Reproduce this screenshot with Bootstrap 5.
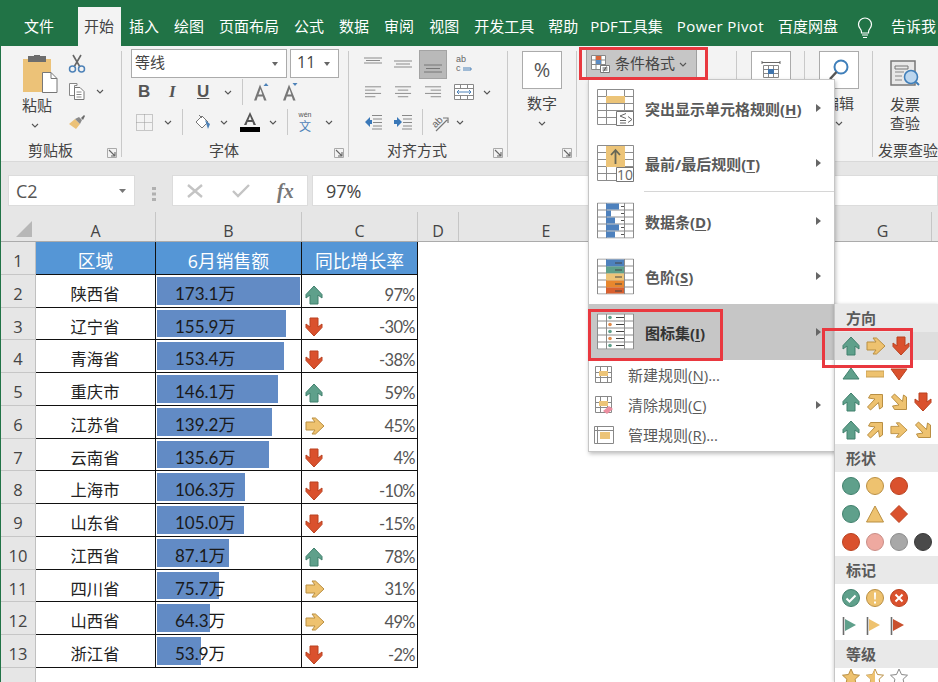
<!doctype html>
<html lang="zh-CN">
<head>
<meta charset="utf-8">
<title>条件格式 图标集</title>
<link href="https://cdn.jsdelivr.net/npm/bootstrap@5.3.0/dist/css/bootstrap.min.css" rel="stylesheet">
<style>
html,body{margin:0;height:682px;overflow:hidden;background:#fff}
body{font-family:"Open Sans","Noto Sans CJK SC",sans-serif;font-size:15px;color:#444;line-height:18px}
.app{position:relative;width:938px;height:682px;overflow:hidden;border-left:1px solid #217346}
.tabs{height:46px;background:#217346;color:#fff;padding:7px 0 0 23px;gap:15px;font-size:15px}
.tabs>span{line-height:39px;flex:none;white-space:nowrap}
.tabs>.tab-on{background:#f3f3f3;color:#444;padding:0 7px 0 6px;margin:0 -7px 0 9px}
.tabs>.tl1{margin-left:-1px}.tabs>.tl2{margin-left:-3px}.tabs>.tl3{margin-left:-1px;letter-spacing:.4px}
.bulb{margin:10px 3px 0 4px;flex:none}
.ribbon{height:116px;background:#f3f3f3;padding:5px 0 0 1px;border-bottom:1px solid #d9d9d9}
.ribbon svg{overflow:visible}
.grp{height:106px;border-right:1px solid #c9c9c9;flex:none}
.g1{width:120px}.g2{width:227px;padding-left:9px}.g3{width:159px}.g4{width:69px}.g5{width:160px}.g6,.g7{width:68px}.g8{width:64px;border-right:0}
.glabel{margin-top:auto;height:16px;margin-bottom:-1px;line-height:16px}
.gtext{flex:1;text-align:center;white-space:nowrap}
.launch{margin:6px 4px 0 8px;flex:none}
.g2 .glabel{margin-left:-9px}
.pastecol{width:36px;margin-left:21px;text-align:center}
.pastecol svg{display:block}
.pastetxt{margin:3px 0 0 -4px;white-space:nowrap;width:36px}
.clipcol{margin-left:9px;padding-top:3px}
.rw{height:24px}
.rw1{height:30px;margin-top:-2px}
.rw2{margin-top:1px}
.rw3{margin-top:6px}
.combo{height:29px;background:#fff;border:1px solid #ababab;padding:0 8px 3px 3px;color:#444;flex:none}
.combo svg{margin-top:3px}
.c1{width:156px}.c2{width:49px;margin-left:3px;font-size:16px;padding-left:6px}
.vsep{width:1px;height:26px;background:#c9c9c9;flex:none}
.fb{font-weight:700;font-size:17px;width:12px;color:#555;font-family:"Liberation Sans",sans-serif;flex:none}
.fi{font-style:italic;font-family:"Liberation Serif",serif}
.fu{text-decoration:underline;width:14px}
.selbox{width:28px;height:29px;background:#b9b9b9;border:1px solid #a3a3a3;flex:none}
.bigbox{width:40px;height:38px;background:#fff;border:1px solid #ababab;margin-left:14px;flex:none;font-size:20px;color:#555}
.bigtext{width:68px;text-align:center;margin-top:5px;white-space:nowrap}
.chevwrap{width:68px;text-align:center;margin-top:7px;line-height:6px}
.cfbtn{height:28px;width:111px;margin:-1px 0 0 9px;background:#c6c6c6;border:1px solid #9f9f9f;border-width:0 1px;padding-left:4px;gap:4px;white-space:nowrap}
.cfbtn span{padding-bottom:2px}
.inv{text-align:center;line-height:19px;padding-top:9px;white-space:nowrap}
.invlabel{margin:auto -10px -1px 5px;white-space:nowrap;line-height:16px;height:16px}
.ml5{margin-left:5px}.ml7{margin-left:7px}.ml9{margin-left:9px}.ml10{margin-left:10px}.ml11{margin-left:11px}.ml12{margin-left:12px}.ml13{margin-left:13px}.ml14{margin-left:14px}.ml15{margin-left:15px}.ml16{margin-left:16px}.ml19{margin-left:19px}
.mt10{margin-top:9px}.mt12{margin-top:13px}.mt4{margin-top:4px}
.fbar{height:50px;background:#e6e6e6;padding:13px 0 0 7px}
.box{height:31px;background:#fff;border:1px solid #dcdcdc;flex:none;font-size:18px;color:#555}
.namebox{width:127px;padding:0 8px 0 7px}
.grip{width:37px;text-align:center}
.fxbox{width:136px;padding-left:13px}
.xok{margin-left:28px}
.fxi{font-family:"Liberation Serif",serif;font-style:italic;font-weight:700;color:#777;font-size:20px;margin-left:27px}
.entry{flex:1;margin-left:4px;padding-left:13px;color:#444}
.colhead{height:30px;background:#e6e6e6;border-bottom:1px solid #ababab;display:flex;font-size:16px;color:#444}
.ch{border-right:1px solid #c6c6c6;text-align:center;line-height:38px;flex:none;height:29px;margin-top:0}
.w0{width:35px}.wa{width:120px}.wb{width:146px}.wc{width:116px}.wd{width:41px}.we{width:175px}.wf{width:200px}.wg{width:98px}
.corner{background:#e6e6e6;border-right:0}
.sheet{display:grid;grid-template-columns:35px 120px 146px 116px;grid-auto-rows:32.75px;font-size:16.3px;color:#222}
.rh{background:#e6e6e6;border-bottom:1px solid #c6c6c6;border-right:1px solid #c0c0c0;text-align:center;line-height:37px;color:#444;font-size:16.5px;font-family:"Open Sans",sans-serif;overflow:hidden}
.td{border-right:1px solid #111;border-bottom:1px solid #111;min-width:0;overflow:hidden}
.thd{background:#5596d6;color:#fff;text-align:center;line-height:38px;font-size:17.8px;white-space:nowrap}
.tda{text-align:center;line-height:38px;padding-right:1px}
.tdb{display:grid;grid-template-rows:minmax(0,1fr);padding:2px 1px;white-space:nowrap}
.tdb>*{grid-area:1/1}
.barfill{background:#628bc5;height:100%}
.barval{padding-left:18px;line-height:34px;font-family:"Lato","Noto Sans CJK SC",sans-serif;font-size:17px;color:#1a1a1a}
.tdc{padding:8px 2px 0;font-family:"Lato",sans-serif;color:#555;font-size:16.5px;letter-spacing:-.6px}
.tdc svg{margin-left:1px}
.rhrest{background:#e6e6e6;height:16px;width:35px;border-right:1px solid #c0c0c0}
.cfmenu{position:absolute;left:587px;top:79px;width:247px;height:373px;background:#fff;border:1px solid #c6c6c6;box-shadow:1px 2px 4px rgba(0,0,0,.25);color:#5a5a5a;font-size:15px;z-index:5}
.mi{height:55.5px;padding-left:8px;font-weight:700}
.mi .mt{margin-left:11px;padding-top:2px;white-space:nowrap}
.mi u,.ms u{text-underline-offset:2px}
.tri{margin-left:auto;margin-right:13px;flex:none}
.mi-on{background:#c6c6c6;color:#333}
.msep{height:1px;background:#d6d6d6;margin:0 0 1px 55px}
.mi.ms{height:30px;padding-left:5px;font-weight:400}
.mi.ms .mt{margin-left:14px;padding-top:0;white-space:nowrap}
.submenu{position:absolute;left:833px;top:304px;width:105px;height:378px;background:#fff;border-left:1px solid #c6c6c6;box-shadow:-1px 0 3px rgba(0,0,0,.15);z-index:6;font-size:15px}
.sh{height:28px;background:#e9e9e9;color:#5a5a5a;font-weight:700;padding-left:11px;line-height:28px}
.sr{height:28px;padding-left:7px;gap:6px}
.sr svg{flex:none}
.sr-on{background:#dedede}
.redbox{position:absolute;border:3px solid #e9383f;z-index:7}
.rb1{left:578px;top:47px;width:129px;height:33px}
.rb2{left:587px;top:309px;width:135px;height:52px}
.rb3{left:821px;top:328px;width:91px;height:40px}
</style>
</head>
<body>
<svg width="0" height="0" class="position-absolute">
<defs>
<symbol id="chev" viewBox="0 0 8 5"><path d="M1 1l3 3 3-3" fill="none" stroke="#555" stroke-width="1.1"/></symbol>
<symbol id="launcher" viewBox="0 0 10 10"><path d="M.5.5h9v9h-9z" fill="none" stroke="#aaa"/><path d="M2 2l5.500 5.500M8 4v4H4" fill="none" stroke="#666" stroke-width="1.1"/></symbol>
<symbol id="up" viewBox="0 0 18 20"><path d="M9 1l8 8.500V13l-4-3v9H5v-9l-4 3V9.500z" fill="#5fa08b" stroke="#41806d"/></symbol>
<symbol id="down" viewBox="0 0 18 20"><path d="M9 19L1 10.500V7l4 3V1h8v9l4-3v3.500z" fill="#da512d" stroke="#ba4220"/></symbol>
<symbol id="right" viewBox="0 0 20 18"><path d="M19 9l-8.500 8H7l3-4H1V5h9L7 1h3.500z" fill="#eec26f" stroke="#b98f43"/></symbol>
<symbol id="ur" viewBox="1 1 18 18"><path d="M17.500 2.500V15l-3 2-1-6.500L5.500 18 2.500 15l7.500-8L3.500 6l2-3.500z" fill="#eec26f" stroke="#b98f43"/></symbol>
<symbol id="dr" viewBox="1 1 18 18"><path d="M17.500 17.500V5l-3-2-1 6.500L5.500 2 2.500 5l7.500 8-6.500 1 2 3.500z" fill="#eec26f" stroke="#b98f43"/></symbol>
<symbol id="grid" viewBox="0 0 37 36"><path d="M.5.500h36v35H.5zM.5 7.500h36M.5 14.500h36M.5 21.500h36M.5 28.500h36M9.500.5v35M27.500.5v35" fill="#fff" stroke="#8c8c8c"/></symbol>
<symbol id="smallgrid" viewBox="0 0 20 20"><path d="M1.500 1.500h16v16h-16zM1.500 7.500h16M1.500 12.500h16M6.500 1.500v16M13.500 1.500v16" fill="#fff" stroke="#888"/><path d="M5 6h9v5H5z" fill="#ecc478"/></symbol>
<symbol id="aleft" viewBox="0 0 18 14"><path d="M0 1.500h17M0 5h11M0 8.500h17M0 12h11" stroke="#888" fill="none"/></symbol>
<symbol id="acenter" viewBox="0 0 18 14"><path d="M0 1.500h17M3 5h11M0 8.500h17M3 12h11" stroke="#888" fill="none"/></symbol>
<symbol id="aright" viewBox="0 0 18 14"><path d="M0 1.500h17M6 5h11M0 8.500h17M6 12h11" stroke="#888" fill="none"/></symbol>
</defs>
</svg>

<div class="app">
  <div class="tabs d-flex">
    <span>文件</span><span class="tab-on">开始</span><span>插入</span><span>绘图</span><span>页面布局</span><span>公式</span><span>数据</span><span>审阅</span><span>视图</span><span>开发工具</span><span class="tl1">帮助</span><span class="tl2">PDF工具集</span><span class="tl3">Power Pivot</span><span class="tl1">百度网盘</span>
    <svg class="bulb" width="16" height="22" viewBox="0 0 16 22"><path d="M8 1a6.500 6.500 0 0 0-6.500 6.500c0 2.500 1.500 3.800 2.500 5.500.5 1 .5 2 .5 3h7c0-1 0-2 .5-3 1-1.700 2.500-3 2.500-5.500A6.500 6.500 0 0 0 8 1z" fill="none" stroke="#fff" stroke-width="1.2"/><path d="M5 18h6M6 20.500h4" stroke="#fff" stroke-width="1.200"/></svg>
    <span>告诉我</span>
  </div>

  <div class="ribbon d-flex">
    <div class="grp g1 d-flex flex-column">
      <div class="d-flex">
        <div class="pastecol">
          <svg class="mt4" width="36" height="38" viewBox="0 0 36 38"><path d="M0 4h28v33H0z" fill="#ecc278"/><path d="M5 1h18v6H5z" fill="#6d6d6d"/><path d="M11 0h6v3h-6z" fill="#6d6d6d"/><path d="M19.500 17.500H28l6 6v14H19.500z" fill="#fff" stroke="#777"/><path d="M28 17.500v6h6" fill="none" stroke="#777"/></svg>
          <div class="pastetxt">粘贴</div>
          <svg class="mt10 ms-2" width="8" height="5"><use href="#chev"/></svg>
        </div>
        <div class="clipcol">
          <svg class="d-block" width="18" height="19" viewBox="0 0 18 19"><path d="M5 1l7 12M13 1L6 13" stroke="#666" stroke-width="1.600"/><circle cx="4.500" cy="15" r="3" fill="none" stroke="#4d82b8" stroke-width="1.500"/><circle cx="13.500" cy="15" r="3" fill="none" stroke="#4d82b8" stroke-width="1.500"/></svg>
          <div class="d-flex align-items-center mt10">
            <svg width="18" height="19" viewBox="0 0 18 19"><path d="M1.500 1.500H9v2H6.500v10h-5z" fill="#fff" stroke="#888"/><path d="M6.500 5.500H12l4 4v8H6.500z" fill="#fff" stroke="#777"/><path d="M8.500 10h5M8.500 12.500h5M8.500 15h5" stroke="#888"/></svg>
            <svg class="ml10" width="8" height="5"><use href="#chev"/></svg>
          </div>
          <svg class="d-block mt12" width="18" height="16" viewBox="0 0 18 16"><path d="M1 10l6-5 5 5-4 5z" fill="#ecc278"/><path d="M7 5l4-2 3 3-2 4z" fill="#8a8a8a"/><path d="M13 4l3-3 1 1-2 4z" fill="#6b6b6b"/></svg>
        </div>
      </div>
      <div class="glabel d-flex"><span class="gtext">剪贴板</span><svg class="launch" width="10" height="10"><use href="#launcher"/></svg></div>
    </div>

    <div class="grp g2 d-flex flex-column">
      <div class="rw1 d-flex">
        <div class="combo c1 d-flex align-items-center justify-content-between"><span>等线</span><svg width="6" height="4" viewBox="0 0 6 4"><path d="M0 0h6L3 4z" fill="#666"/></svg></div>
        <div class="combo c2 d-flex align-items-center justify-content-between"><span>11</span><svg width="6" height="4" viewBox="0 0 6 4"><path d="M0 0h6L3 4z" fill="#666"/></svg></div>
      </div>
      <div class="rw rw2 d-flex align-items-center">
        <span class="fb ml7">B</span><span class="fb fi ml19">I</span><span class="fb fu ml16">U</span>
        <svg class="ml13" width="8" height="5"><use href="#chev"/></svg>
        <span class="vsep ml10"></span>
        <svg class="ml11" width="15" height="18" viewBox="0 0 15 18"><path d="M7 1.500l-6 16h2.500l1.300-4h5l1.300 4h2.500zM5.500 11.500L7.500 6l1.800 5.500z" fill="#777" transform="translate(-1 0)"/><path d="M9.500 3l2.500-3 2.500 3z" fill="#4d82b8"/></svg>
        <svg class="ml14" width="15" height="18" viewBox="0 0 15 18"><path d="M7 1.500l-6 16h2.500l1.300-4h5l1.300 4h2.500zM5.500 11.500L7.500 6l1.800 5.500z" fill="#777" transform="translate(-1 0)"/><path d="M9.500 0l2.500 3 2.500-3z" fill="#4d82b8"/></svg>
      </div>
      <div class="rw rw3 d-flex align-items-center">
        <svg class="ml5" width="17" height="17" viewBox="0 0 17 17"><path d="M.5.500h16v16H.5zM8.500.5v16M.5 8.500h16" fill="none" stroke="#999" stroke-dasharray="1 1"/></svg>
        <svg class="ml11" width="8" height="5"><use href="#chev"/></svg>
        <span class="vsep ml10"></span>
        <svg class="ml11" width="17" height="17" viewBox="0 0 17 17"><path d="M2 8l6-6 6 6-6 6z" fill="#fff" stroke="#777"/><path d="M5 1l3 3" stroke="#777"/><path d="M11 6l5 4-2 5z" fill="#4d82b8"/></svg>
        <svg class="ml9" width="8" height="5"><use href="#chev"/></svg>
        <svg class="ml12" width="20" height="22" viewBox="0 0 20 22"><path d="M10 1l-6 13h2.500l1-3h5l1 3H16zM8.400 9L10 5l1.600 4z" fill="#555"/><path d="M0 16h20v5H0z" fill="#000"/></svg>
        <svg class="ml9" width="8" height="5"><use href="#chev"/></svg>
        <span class="vsep ml10"></span>
        <svg class="ml9" width="16" height="20" viewBox="0 0 16 20"><text x="8" y="5" text-anchor="middle" font-size="7" fill="#555" font-family="Liberation Sans">wén</text><text x="8" y="19" text-anchor="middle" font-size="12" fill="#4d82b8" font-family="Noto Sans CJK SC">文</text></svg>
        <svg class="ml12" width="8" height="5"><use href="#chev"/></svg>
      </div>
      <div class="glabel d-flex"><span class="gtext">字体</span><svg class="launch" width="10" height="10"><use href="#launcher"/></svg></div>
    </div>

    <div class="grp g3 d-flex flex-column">
      <div class="rw1 d-flex align-items-center">
        <svg class="ml15" width="18" height="14" viewBox="0 0 18 14"><path d="M0 1h18M2 3.500h14M0 6h18" stroke="#8b8b8b" fill="none"/></svg>
        <svg class="ml12" width="18" height="14" viewBox="0 0 18 14"><path d="M0 4h18M2 7h14M0 10h18" stroke="#8b8b8b" fill="none"/></svg>
        <div class="selbox ml7 d-flex align-items-end justify-content-center"><svg class="mb-1" width="18" height="10" viewBox="0 0 18 10"><path d="M0 1h18M2 4.500h14M0 8h18" stroke="#777" fill="none"/></svg></div>
        <svg class="ml9" width="16" height="20" viewBox="0 0 16 20"><text x="0" y="8" font-size="9" fill="#666" font-family="Liberation Sans">ab</text><text x="0" y="17" font-size="9" fill="#666" font-family="Liberation Sans">c</text><path d="M7 14h8v2H7" fill="none" stroke="#4d82b8"/></svg>
      </div>
      <div class="rw rw2 d-flex align-items-center">
        <svg class="ml16" width="17" height="14"><use href="#aleft"/></svg>
        <svg class="ml13" width="17" height="14"><use href="#acenter"/></svg>
        <svg class="ml13" width="17" height="14"><use href="#aright"/></svg>
        <svg class="ml12" width="20" height="18" viewBox="0 0 20 18"><path d="M.5 1.500h19v15H.5zM.5 5.500h19M.5 12.500h19M6.500 1.500v4M13.500 1.500v4M6.500 12.500v4M13.500 12.500v4" fill="#fff" stroke="#888"/><path d="M3 9h14M5 7L3 9l2 2M15 7l2 2-2 2" fill="none" stroke="#4d82b8"/></svg>
        <svg class="ml9" width="8" height="5"><use href="#chev"/></svg>
      </div>
      <div class="rw rw3 d-flex align-items-center">
        <svg class="ml15" width="18" height="16" viewBox="0 0 18 16"><path d="M8 1.500h10M9 5h9M9 8.500h9M9 12h9M8 15h10" stroke="#888" fill="none"/><path d="M6 3L1 8l5 5v-3h2V6H6z" fill="#3a78b8"/></svg>
        <svg class="ml12" width="18" height="16" viewBox="0 0 18 16"><path d="M8 1.500h10M9 5h9M9 8.500h9M9 12h9M8 15h10" stroke="#888" fill="none"/><path d="M3 3l5 5-5 5v-3H0V6h3z" fill="#3a78b8"/></svg>
        <span class="vsep ml10"></span>
        <svg class="ml7" width="19" height="19" viewBox="0 0 19 19"><text x="2" y="11" font-size="10" fill="#666" transform="rotate(-45 9 9)" font-family="Liberation Sans">ab</text><path d="M6 18L17 7M13 5h5v5" fill="none" stroke="#777" stroke-width="1.200"/></svg>
        <svg class="ml7" width="8" height="5"><use href="#chev"/></svg>
      </div>
      <div class="glabel d-flex"><span class="gtext">对齐方式</span><svg class="launch" width="10" height="10"><use href="#launcher"/></svg></div>
    </div>

    <div class="grp g4 d-flex flex-column">
      <div class="bigbox d-flex align-items-center justify-content-center">%</div>
      <div class="bigtext">数字</div>
      <div class="chevwrap"><svg width="8" height="5"><use href="#chev"/></svg></div>
      <div class="glabel d-flex"><span class="gtext"></span><svg class="launch" width="10" height="10"><use href="#launcher"/></svg></div>
    </div>

    <div class="grp g5">
      <div class="cfbtn d-flex align-items-center">
        <svg width="20" height="20" viewBox="0 0 20 20"><path d="M.5 1.500h14v14H.5zM.5 6h14M.5 10.500h14M5 1.500v14M10 1.500v14" fill="#fff" stroke="#888"/><path d="M5 2h5v4H5z" fill="#d9653b"/><path d="M5 6h5v4H5z" fill="#5b8cc4"/><path d="M9.500 11.500h9v7h-9z" fill="#fff" stroke="#777"/><path d="M11.500 14h5M11.500 16h5M15.500 12.500l-3 5" stroke="#555" fill="none"/></svg>
        <span>条件格式</span>
        <svg width="8" height="5"><use href="#chev"/></svg>
      </div>
    </div>

    <div class="grp g6"><div class="bigbox d-flex justify-content-center pt-2"><svg width="20" height="18" viewBox="0 0 20 18"><path d="M1 1v3M19 1v3M1 2.500h18" stroke="#666" fill="none"/><path d="M2.500 5.500h15v12h-15zM2.500 9.500h15M2.500 13.500h15M7.500 5.500v12M12.500 5.500v12" fill="#fff" stroke="#888"/><path d="M7 9h6v5H7z" fill="#3f74ad"/></svg></div></div>

    <div class="grp g7 d-flex flex-column">
      <div class="bigbox d-flex justify-content-center align-items-center"><svg width="22" height="24" viewBox="0 0 22 24"><circle cx="13" cy="9" r="6.500" fill="none" stroke="#3f7fba" stroke-width="2"/><path d="M8.500 14L2 21" stroke="#555" stroke-width="2.500"/></svg></div>
      <div class="bigtext">编辑</div>
      <div class="chevwrap"><svg width="8" height="5"><use href="#chev"/></svg></div>
    </div>

    <div class="grp g8 d-flex flex-column">
      <div class="inv d-flex flex-column align-items-center">
        <svg class="mx-auto" width="30" height="26" viewBox="0 0 30 26"><path d="M1 1h24v24H1z" fill="#e8e8e8" stroke="#777" stroke-width="1.500"/><path d="M5 6h13v3H5z" fill="none" stroke="#777"/><path d="M5 12h9M5 16h7M5 20h7" stroke="#888"/><circle cx="21" cy="17" r="6.500" fill="#bcd6ee" stroke="#3f7fba" stroke-width="1.600"/><path d="M26 22l3 3" stroke="#3f7fba" stroke-width="2"/></svg>
        <div class="mt10">发票</div>
        <div>查验</div>
      </div>
      <div class="invlabel">发票查验</div>
    </div>
  </div>

  <div class="fbar d-flex">
    <div class="box namebox d-flex align-items-center justify-content-between"><span>C2</span><svg width="7" height="4" viewBox="0 0 7 4"><path d="M0 0h7L3.500 4z" fill="#777"/></svg></div>
    <div class="grip d-flex justify-content-center align-items-center"><svg width="4" height="14" viewBox="0 0 4 14"><path d="M0 0h4v3H0zM0 5.500h4v3H0zM0 11h4v3H0z" fill="#b0b0b0"/></svg></div>
    <div class="box fxbox d-flex align-items-center">
      <svg width="18" height="14" viewBox="0 0 18 14"><path d="M2 1l14 12M16 1L2 13" stroke="#c4c4c4" stroke-width="2.400"/></svg>
      <svg class="xok" width="18" height="14" viewBox="0 0 18 14"><path d="M1 7l5 5L17 1" fill="none" stroke="#c4c4c4" stroke-width="2.400"/></svg>
      <span class="fxi">fx</span>
    </div>
    <div class="box entry d-flex align-items-center">97%</div>
  </div>

  <div class="colhead">
    <div class="ch w0 corner d-flex align-items-end justify-content-end pe-1"><svg class="mb-1" width="16" height="16" viewBox="0 0 16 16"><path d="M16 0v16H0z" fill="#b7b7b7"/></svg></div>
    <div class="ch wa">A</div><div class="ch wb">B</div><div class="ch wc">C</div><div class="ch wd">D</div><div class="ch we">E</div><div class="ch wf"></div><div class="ch wg">G</div>
  </div>

  <div class="sheet">
    <div class="rh">1</div><div class="td thd">区域</div><div class="td thd">6月销售额</div><div class="td thd">同比增长率</div>

    <div class="rh">2</div><div class="td tda">陕西省</div><div class="td tdb"><span class="barfill" style="width:100%"></span><span class="barval">173.1万</span></div><div class="td tdc d-flex align-items-center justify-content-between"><svg width="18" height="20"><use href="#up"/></svg><span>97%</span></div>
    <div class="rh">3</div><div class="td tda">辽宁省</div><div class="td tdb"><span class="barfill" style="width:90%"></span><span class="barval">155.9万</span></div><div class="td tdc d-flex align-items-center justify-content-between"><svg width="18" height="20"><use href="#down"/></svg><span>-30%</span></div>
    <div class="rh">4</div><div class="td tda">青海省</div><div class="td tdb"><span class="barfill" style="width:88.600%"></span><span class="barval">153.4万</span></div><div class="td tdc d-flex align-items-center justify-content-between"><svg width="18" height="20"><use href="#down"/></svg><span>-38%</span></div>
    <div class="rh">5</div><div class="td tda">重庆市</div><div class="td tdb"><span class="barfill" style="width:84.400%"></span><span class="barval">146.1万</span></div><div class="td tdc d-flex align-items-center justify-content-between"><svg width="18" height="20"><use href="#up"/></svg><span>59%</span></div>
    <div class="rh">6</div><div class="td tda">江苏省</div><div class="td tdb"><span class="barfill" style="width:80.400%"></span><span class="barval">139.2万</span></div><div class="td tdc d-flex align-items-center justify-content-between"><svg width="20" height="18"><use href="#right"/></svg><span>45%</span></div>
    <div class="rh">7</div><div class="td tda">云南省</div><div class="td tdb"><span class="barfill" style="width:78.300%"></span><span class="barval">135.6万</span></div><div class="td tdc d-flex align-items-center justify-content-between"><svg width="18" height="20"><use href="#down"/></svg><span>4%</span></div>
    <div class="rh">8</div><div class="td tda">上海市</div><div class="td tdb"><span class="barfill" style="width:61.400%"></span><span class="barval">106.3万</span></div><div class="td tdc d-flex align-items-center justify-content-between"><svg width="18" height="20"><use href="#down"/></svg><span>-10%</span></div>
    <div class="rh">9</div><div class="td tda">山东省</div><div class="td tdb"><span class="barfill" style="width:60.700%"></span><span class="barval">105.0万</span></div><div class="td tdc d-flex align-items-center justify-content-between"><svg width="18" height="20"><use href="#down"/></svg><span>-15%</span></div>
    <div class="rh">10</div><div class="td tda">江西省</div><div class="td tdb"><span class="barfill" style="width:50.300%"></span><span class="barval">87.1万</span></div><div class="td tdc d-flex align-items-center justify-content-between"><svg width="18" height="20"><use href="#up"/></svg><span>78%</span></div>
    <div class="rh">11</div><div class="td tda">四川省</div><div class="td tdb"><span class="barfill" style="width:43.700%"></span><span class="barval">75.7万</span></div><div class="td tdc d-flex align-items-center justify-content-between"><svg width="20" height="18"><use href="#right"/></svg><span>31%</span></div>
    <div class="rh">12</div><div class="td tda">山西省</div><div class="td tdb"><span class="barfill" style="width:37.100%"></span><span class="barval">64.3万</span></div><div class="td tdc d-flex align-items-center justify-content-between"><svg width="20" height="18"><use href="#right"/></svg><span>49%</span></div>
    <div class="rh">13</div><div class="td tda">浙江省</div><div class="td tdb"><span class="barfill" style="width:31.100%"></span><span class="barval">53.9万</span></div><div class="td tdc d-flex align-items-center justify-content-between"><svg width="18" height="20"><use href="#down"/></svg><span>-2%</span></div>
  </div>
  <div class="rhrest"></div>

  <div class="cfmenu">
    <div class="mi d-flex align-items-center">
      <svg width="37" height="37" viewBox="0 0 37 37"><use href="#grid" width="37" height="36"/><path d="M9 7h19v7H9z" fill="#ecc478"/><path d="M19.500 22.500h17v14h-17z" fill="#fff" stroke="#777"/><path d="M29 24.500l-6 2.500 6 2.500M23 31.500h6M23 34h6M31 27.500l4 3-4 3" fill="none" stroke="#666"/></svg>
      <span class="mt">突出显示单元格规则(<u>H</u>)</span>
      <svg class="tri" width="5" height="8" viewBox="0 0 5 8"><path d="M0 0l5 4-5 4z" fill="#666"/></svg>
    </div>
    <div class="mi d-flex align-items-center">
      <svg width="37" height="37" viewBox="0 0 37 37"><use href="#grid" width="37" height="36"/><path d="M9 1h19v21H9z" fill="#ecc478"/><path d="M18.500 19V5M14 10l4.500-5 4.500 5" fill="none" stroke="#665" stroke-width="1.800"/><path d="M19.500 22.500h17v14h-17z" fill="#fff" stroke="#777"/><text x="28" y="34.500" text-anchor="middle" font-size="14" fill="#666" font-family="Open Sans" font-weight="400">10</text></svg>
      <span class="mt">最前/最后规则(<u>T</u>)</span>
      <svg class="tri" width="5" height="8" viewBox="0 0 5 8"><path d="M0 0l5 4-5 4z" fill="#666"/></svg>
    </div>
    <div class="msep"></div>
    <div class="mi d-flex align-items-center">
      <svg width="37" height="37" viewBox="0 0 37 36"><use href="#grid" width="37" height="36"/><path d="M9 1h13v6H9zM9 8h5v6H9zM9 15h9v6H9zM9 22h13v6H9zM9 29h9v6H9z" fill="#4e81bd"/><path d="M24 4h3M24 11h3M24 18h3M24 25h3M24 32h3" stroke="#555"/></svg>
      <span class="mt">数据条(<u>D</u>)</span>
      <svg class="tri" width="5" height="8" viewBox="0 0 5 8"><path d="M0 0l5 4-5 4z" fill="#666"/></svg>
    </div>
    <div class="mi d-flex align-items-center">
      <svg width="37" height="37" viewBox="0 0 37 36"><use href="#grid" width="37" height="36"/><path d="M9 1h18v7H9z" fill="#4e81bd"/><path d="M9 8h18v7H9z" fill="#5fa08b"/><path d="M9 15h18v7H9z" fill="#ecc478"/><path d="M9 22h18v7H9z" fill="#e8872e"/><path d="M9 29h18v6H9z" fill="#d9602f"/><path d="M18 4.500h7M18 11.500h7M18 18.500h7M18 25.500h7M18 32.500h7" stroke="#444"/></svg>
      <span class="mt">色阶(<u>S</u>)</span>
      <svg class="tri" width="5" height="8" viewBox="0 0 5 8"><path d="M0 0l5 4-5 4z" fill="#666"/></svg>
    </div>
    <div class="mi mi-on d-flex align-items-center">
      <svg width="37" height="37" viewBox="0 0 37 36"><use href="#grid" width="37" height="36"/><circle cx="13" cy="4" r="1.800" fill="#5fa08b"/><circle cx="13" cy="11" r="1.800" fill="#e08a4a"/><circle cx="13" cy="18" r="1.800" fill="#5fa08b"/><circle cx="13" cy="25" r="1.800" fill="#e08a4a"/><circle cx="13" cy="32" r="1.800" fill="#5fa08b"/><path d="M19 4h8M19 11h8M19 18h8M19 25h8M19 32h8" stroke="#444"/></svg>
      <span class="mt">图标集(<u>I</u>)</span>
      <svg class="tri" width="5" height="8" viewBox="0 0 5 8"><path d="M0 0l5 4-5 4z" fill="#666"/></svg>
    </div>
    <div class="ms mi d-flex align-items-center"><svg width="20" height="20"><use href="#smallgrid"/></svg><span class="mt">新建规则(<u>N</u>)...</span></div>
    <div class="ms mi d-flex align-items-center"><svg width="20" height="20" viewBox="0 0 20 20"><use href="#smallgrid"/><path d="M9 16l6-5 4 3-6 5z" fill="#ec8ea0"/></svg><span class="mt">清除规则(<u>C</u>)</span><svg class="tri" width="5" height="8" viewBox="0 0 5 8"><path d="M0 0l5 4-5 4z" fill="#666"/></svg></div>
    <div class="ms mi d-flex align-items-center"><svg width="20" height="20" viewBox="0 0 20 20"><path d="M.5 1.500h19v17H.5zM3.500 1.500v17M.5 5.500h19" fill="#fff" stroke="#888"/><path d="M6 7h10v7H6z" fill="#ecc478"/></svg><span class="mt">管理规则(<u>R</u>)...</span></div>
  </div>

  <div class="submenu">
    <div class="sh">方向</div>
    <div class="sr sr-on d-flex align-items-center"><svg width="18" height="20"><use href="#up"/></svg><svg width="20" height="18"><use href="#right"/></svg><svg width="18" height="20"><use href="#down"/></svg></div>
    <div class="sr d-flex align-items-center"><svg width="18" height="20" viewBox="0 0 18 20"><path d="M9 4l8 11H1z" fill="#5fa08b" stroke="#41806d"/></svg><svg width="18" height="20" viewBox="0 0 18 20"><path d="M0 7h18v6H0z" fill="#eec26f" stroke="#c9a055"/></svg><svg width="18" height="20" viewBox="0 0 18 20"><path d="M9 16L17 5H1z" fill="#da512d" stroke="#ba4220"/></svg></div>
    <div class="sr d-flex align-items-center"><svg width="18" height="20"><use href="#up"/></svg><svg width="18" height="18"><use href="#ur"/></svg><svg width="18" height="18"><use href="#dr"/></svg><svg width="18" height="20"><use href="#down"/></svg></div>
    <div class="sr d-flex align-items-center"><svg width="18" height="20"><use href="#up"/></svg><svg width="18" height="18"><use href="#ur"/></svg><svg width="18" height="18"><use href="#right"/></svg><svg width="18" height="18"><use href="#dr"/></svg></div>
    <div class="sh">形状</div>
    <div class="sr d-flex align-items-center"><svg width="18" height="18"><circle cx="9" cy="9" r="8.500" fill="#5fa08b" stroke="#41806d"/></svg><svg width="18" height="18"><circle cx="9" cy="9" r="8.500" fill="#eec26f" stroke="#b98f43"/></svg><svg width="18" height="18"><circle cx="9" cy="9" r="8.500" fill="#da512d" stroke="#ba4220"/></svg></div>
    <div class="sr d-flex align-items-center"><svg width="18" height="18"><circle cx="9" cy="9" r="8.500" fill="#5fa08b" stroke="#41806d"/></svg><svg width="18" height="18"><path d="M9 1l8.500 16H.5z" fill="#eec26f" stroke="#b98f43"/></svg><svg width="18" height="18"><path d="M9 .5L17.500 9 9 17.500.5 9z" fill="#da512d" stroke="#ba4220"/></svg></div>
    <div class="sr d-flex align-items-center"><svg width="18" height="18"><circle cx="9" cy="9" r="8.500" fill="#da512d" stroke="#ba4220"/></svg><svg width="18" height="18"><circle cx="9" cy="9" r="8.500" fill="#eea9a0" stroke="#c98d86"/></svg><svg width="18" height="18"><circle cx="9" cy="9" r="8.500" fill="#a8a8a8" stroke="#8d8d8d"/></svg><svg width="18" height="18"><circle cx="9" cy="9" r="8.500" fill="#4a4a4a" stroke="#3a3a3a"/></svg></div>
    <div class="sh">标记</div>
    <div class="sr d-flex align-items-center"><svg width="18" height="18"><circle cx="9" cy="9" r="8.500" fill="#5fa08b" stroke="#41806d"/><path d="M4.500 9.500l3 3 6-6" fill="none" stroke="#fff" stroke-width="2"/></svg><svg width="18" height="18"><circle cx="9" cy="9" r="8.500" fill="#eec26f" stroke="#b98f43"/><path d="M8 3.500h2l-.3 7H8.300zM8 12.500h2v2H8z" fill="#fff"/></svg><svg width="18" height="18"><circle cx="9" cy="9" r="8.500" fill="#da512d" stroke="#ba4220"/><path d="M5.500 5.500l7 7M12.500 5.500l-7 7" stroke="#fff" stroke-width="2"/></svg></div>
    <div class="sr d-flex align-items-center"><svg width="18" height="20"><path d="M1.500 1v18" stroke="#6b6b6b" stroke-width="1.600"/><path d="M3 3l11 6-11 6z" fill="#5fa08b"/></svg><svg width="18" height="20"><path d="M1.500 1v18" stroke="#6b6b6b" stroke-width="1.600"/><path d="M3 3l11 6-11 6z" fill="#eec26f"/></svg><svg width="18" height="20"><path d="M1.500 1v18" stroke="#6b6b6b" stroke-width="1.600"/><path d="M3 3l11 6-11 6z" fill="#c9502e"/></svg></div>
    <div class="sh">等级</div>
    <div class="sr d-flex align-items-start"><svg width="18" height="18"><path d="M9 1l2.500 5.500 6 .7-4.400 4 1.200 6L9 14.200 3.700 17.200l1.200-6-4.400-4 6-.7z" fill="#eec26f" stroke="#b98f43"/></svg><svg width="18" height="18"><path d="M9 1l2.500 5.500 6 .7-4.400 4 1.200 6L9 14.200 3.700 17.200l1.200-6-4.400-4 6-.7z" fill="#fff" stroke="#b98f43"/><path d="M9 1v13.200L3.700 17.200l1.200-6-4.400-4 6-.7z" fill="#eec26f"/></svg><svg width="18" height="18"><path d="M9 1l2.500 5.500 6 .7-4.400 4 1.200 6L9 14.200 3.700 17.200l1.200-6-4.400-4 6-.7z" fill="#fff" stroke="#888"/></svg></div>
  </div>

  <div class="redbox rb1"></div>
  <div class="redbox rb2"></div>
  <div class="redbox rb3"></div>
</div>
<script src="https://cdn.jsdelivr.net/npm/bootstrap@5.3.0/dist/js/bootstrap.bundle.min.js"></script>
</body>
</html>
